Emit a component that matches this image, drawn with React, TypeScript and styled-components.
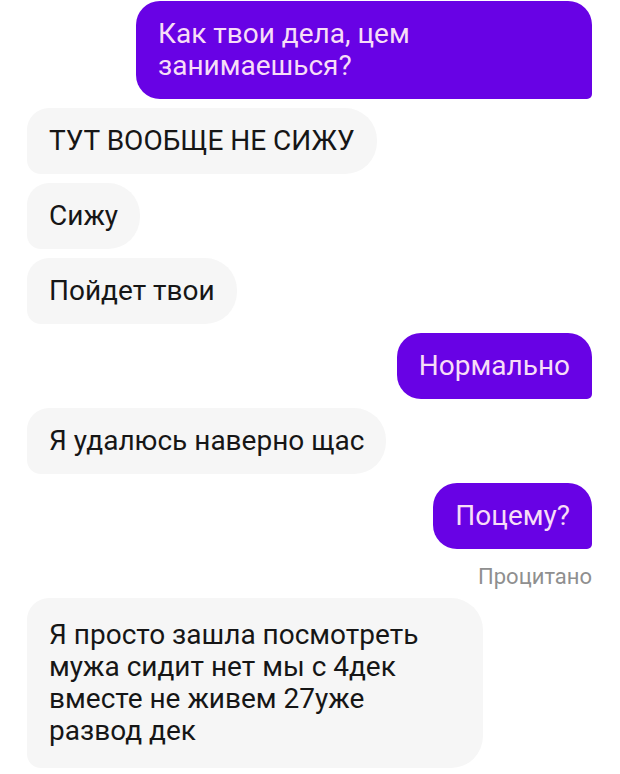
import React from "react";
import styled, { createGlobalStyle } from "styled-components";

const GlobalStyle = createGlobalStyle`
  html, body {
    margin: 0;
    padding: 0;
    background: #ffffff;
  }
  body {
    font-family: Roboto, "Noto Sans", Arial, sans-serif;
  }
`;

const Chat = styled.div`
  display: flex;
  flex-direction: column;
  gap: 9px;
  padding: 1px 28px 0 27px;
  width: 620px;
  height: 774px;
  box-sizing: border-box;
  overflow: hidden;
`;

const Bubble = styled.div<{ $out?: boolean; $wide?: boolean; $pad?: number }>`
  align-self: ${(p) => (p.$out ? "flex-end" : "flex-start")};
  box-sizing: border-box;
  max-width: 456px;
  width: ${(p) => (p.$wide ? "456px" : "auto")};
  padding: ${(p) => p.$pad ?? 17}px 22px;
  font-size: 28px;
  line-height: 32px;
  background: ${(p) => (p.$out ? "#6802e5" : "#f6f6f6")};
  color: ${(p) => (p.$out ? "#f7ddf7" : "#161616")};
  border-radius: ${(p) => (p.$out ? "24px 24px 5px 24px" : "22px 32px 32px 14px")};
`;

const ReadLabel = styled.div`
  align-self: flex-end;
  margin-top: 7px;
  font-size: 22px;
  line-height: 24px;
  color: #8f8f8f;
`;

export default function App() {
  return (
    <>
      <GlobalStyle />
      <Chat>
        <Bubble $out $wide>
          Как твои дела, цем
          <br />
          занимаешься?
        </Bubble>
        <Bubble>ТУТ ВООБЩЕ НЕ СИЖУ</Bubble>
        <Bubble>Сижу</Bubble>
        <Bubble>Пойдет твои</Bubble>
        <Bubble $out>Нормально</Bubble>
        <Bubble>Я удалюсь наверно щас</Bubble>
        <Bubble $out>Поцему?</Bubble>
        <ReadLabel>Процитано</ReadLabel>
        <Bubble $wide $pad={21}>
          Я просто зашла посмотреть
          <br />
          мужа сидит нет мы с 4дек
          <br />
          вместе не живем 27уже
          <br />
          развод дек
        </Bubble>
      </Chat>
    </>
  );
}
